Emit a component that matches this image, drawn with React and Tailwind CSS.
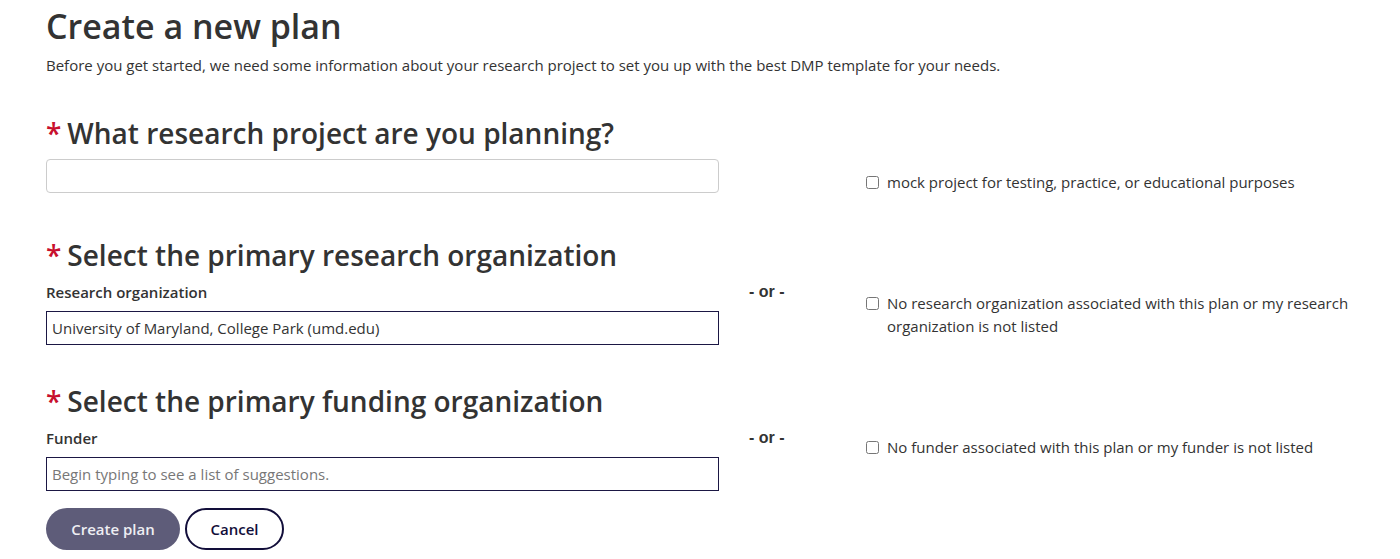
export default function App() {
  return (
    <div className="min-h-[559px] bg-white text-[#333] font-['Open_Sans',sans-serif]">
      <div className="pl-[46px] pr-[40px] pt-[4px]">
        <h1 className="text-[34px] leading-[44px] font-semibold">Create a new plan</h1>
        <p className="mt-[7px] text-[15px] leading-[20px]">
          Before you get started, we need some information about your research project to set you up with the best DMP template for your needs.
        </p>

        <section className="mt-[40px]">
          <h2 className="text-[28px] leading-[36px] font-semibold">
            <span className="text-[#c8102e] mr-[6px]">*</span>What research project are you planning?
          </h2>
          <div className="mt-[8px] flex items-start">
            <input className="w-[673px] h-[34px] border border-[#ccc] rounded-[4px] px-[6px]" />
            <label className="ml-[147px] mt-[12px] flex items-start gap-[8px] text-[15px] leading-[23px]">
              <input type="checkbox" className="mt-[5px] w-[13px] h-[13px]" />
              mock project for testing, practice, or educational purposes
            </label>
          </div>
        </section>

        <section className="mt-[43px]">
          <h2 className="text-[28px] leading-[36px] font-semibold">
            <span className="text-[#c8102e] mr-[6px]">*</span>Select the primary research organization
          </h2>
          <div className="mt-[7px] flex items-start">
            <div className="w-[673px]">
              <div className="text-[15px] leading-[24px] font-semibold">Research organization</div>
              <input
                className="mt-[7px] w-full h-[34px] border border-[#1b1744] px-[5px] text-[15px] text-[#333]"
                defaultValue="University of Maryland, College Park (umd.edu)"
              />
            </div>
            <div className="w-[147px] pl-[30px] text-[16px] leading-[24px] font-bold font-['Liberation_Sans',sans-serif]">- or -</div>
            <label className="mt-[12px] w-[490px] flex items-start gap-[8px] text-[15px] leading-[23px]">
              <input type="checkbox" className="mt-[5px] w-[13px] h-[13px] shrink-0" />
              <span>No research organization associated with this plan or my research organization is not listed</span>
            </label>
          </div>
        </section>

        <section className="mt-[38px]">
          <h2 className="text-[28px] leading-[36px] font-semibold">
            <span className="text-[#c8102e] mr-[6px]">*</span>Select the primary funding organization
          </h2>
          <div className="mt-[7px] flex items-start">
            <div className="w-[673px]">
              <div className="text-[15px] leading-[24px] font-semibold">Funder</div>
              <input
                className="mt-[7px] w-full h-[34px] border border-[#1b1744] px-[5px] text-[15px] placeholder:text-[#777]"
                placeholder="Begin typing to see a list of suggestions."
              />
            </div>
            <div className="w-[147px] pl-[30px] text-[16px] leading-[24px] font-bold font-['Liberation_Sans',sans-serif]">- or -</div>
            <label className="mt-[10px] flex items-start gap-[8px] text-[15px] leading-[23px]">
              <input type="checkbox" className="mt-[5px] w-[13px] h-[13px] shrink-0" />
              <span>No funder associated with this plan or my funder is not listed</span>
            </label>
          </div>
        </section>

        <div className="mt-[17px] flex gap-[5px]">
          <button className="h-[42px] w-[134px] rounded-[21px] bg-[#5e5c79] text-[#eeeef3] text-[15px] font-semibold">Create plan</button>
          <button className="h-[42px] w-[99px] rounded-[21px] border-2 border-[#120e3a] text-[#120e3a] text-[15px] font-semibold">Cancel</button>
        </div>
      </div>
    </div>
  );
}
